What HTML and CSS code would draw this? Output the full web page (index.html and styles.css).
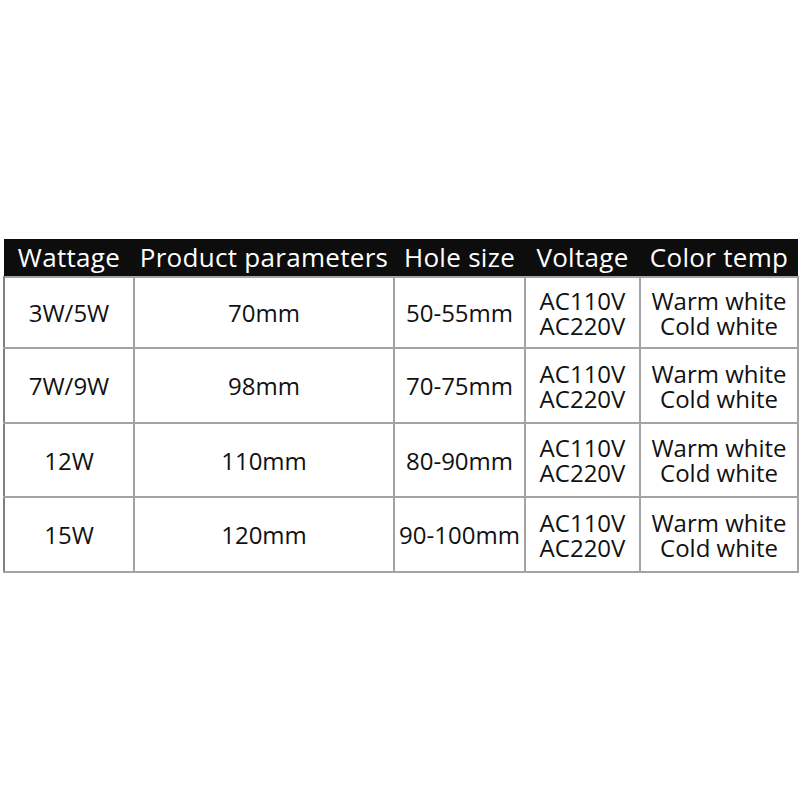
FILE: index.html
```html
<!DOCTYPE html>
<html>
<head>
<meta charset="utf-8">
<link rel="stylesheet" href="styles.css">
</head>
<body>
<table class="spec">
  <colgroup>
    <col class="c1"><col class="c2"><col class="c3"><col class="c4"><col class="c5">
  </colgroup>
  <thead>
    <tr><th>Wattage</th><th>Product parameters</th><th>Hole size</th><th>Voltage</th><th>Color temp</th></tr>
  </thead>
  <tbody>
    <tr class="r1"><td>3W/5W</td><td>70mm</td><td>50-55mm</td><td><span class="ln">AC110V</span><span class="ln">AC220V</span></td><td><span class="ln">Warm white</span><span class="ln">Cold white</span></td></tr>
    <tr class="r2"><td>7W/9W</td><td>98mm</td><td>70-75mm</td><td><span class="ln">AC110V</span><span class="ln">AC220V</span></td><td><span class="ln">Warm white</span><span class="ln">Cold white</span></td></tr>
    <tr class="r3"><td>12W</td><td>110mm</td><td>80-90mm</td><td><span class="ln">AC110V</span><span class="ln">AC220V</span></td><td><span class="ln">Warm white</span><span class="ln">Cold white</span></td></tr>
    <tr class="r4"><td>15W</td><td>120mm</td><td>90-100mm</td><td><span class="ln">AC110V</span><span class="ln">AC220V</span></td><td><span class="ln">Warm white</span><span class="ln">Cold white</span></td></tr>
  </tbody>
</table>
</body>
</html>
```
FILE: styles.css
```css
html, body {
  margin: 0;
  padding: 0;
  background: #fff;
}
body {
  padding: 239px 0 0 3px;
  font-family: "Open Sans", "Noto Sans", sans-serif;
  color: #111;
}
.spec {
  border-collapse: collapse;
  table-layout: fixed;
  width: 794px;
}
.c1 { width: 130px; }
.c2 { width: 260px; }
.c3 { width: 131px; }
.c4 { width: 115px; }
.c5 { width: 158px; }
.spec th {
  background: #0d0d0d;
  color: #fff;
  font-weight: 400;
  font-size: 26px;
  letter-spacing: 0.3px;
  height: 37px;
  padding: 0;
  line-height: 37px;
  white-space: nowrap;
  border: 0;
}
.spec td {
  border: 2px solid #a3a3a3;
  text-align: center;
  vertical-align: middle;
  font-size: 24px;
  line-height: 25px;
  padding: 0;
  white-space: nowrap;
}
.spec td:first-child { border-left-color: #808080; }
.ln {
  display: block;
  line-height: 25px;
}
.r1 td { height: 69px; }
.r2 td { height: 73px; }
.r3 td { height: 72px; }
.r4 td { height: 73px; }
```
